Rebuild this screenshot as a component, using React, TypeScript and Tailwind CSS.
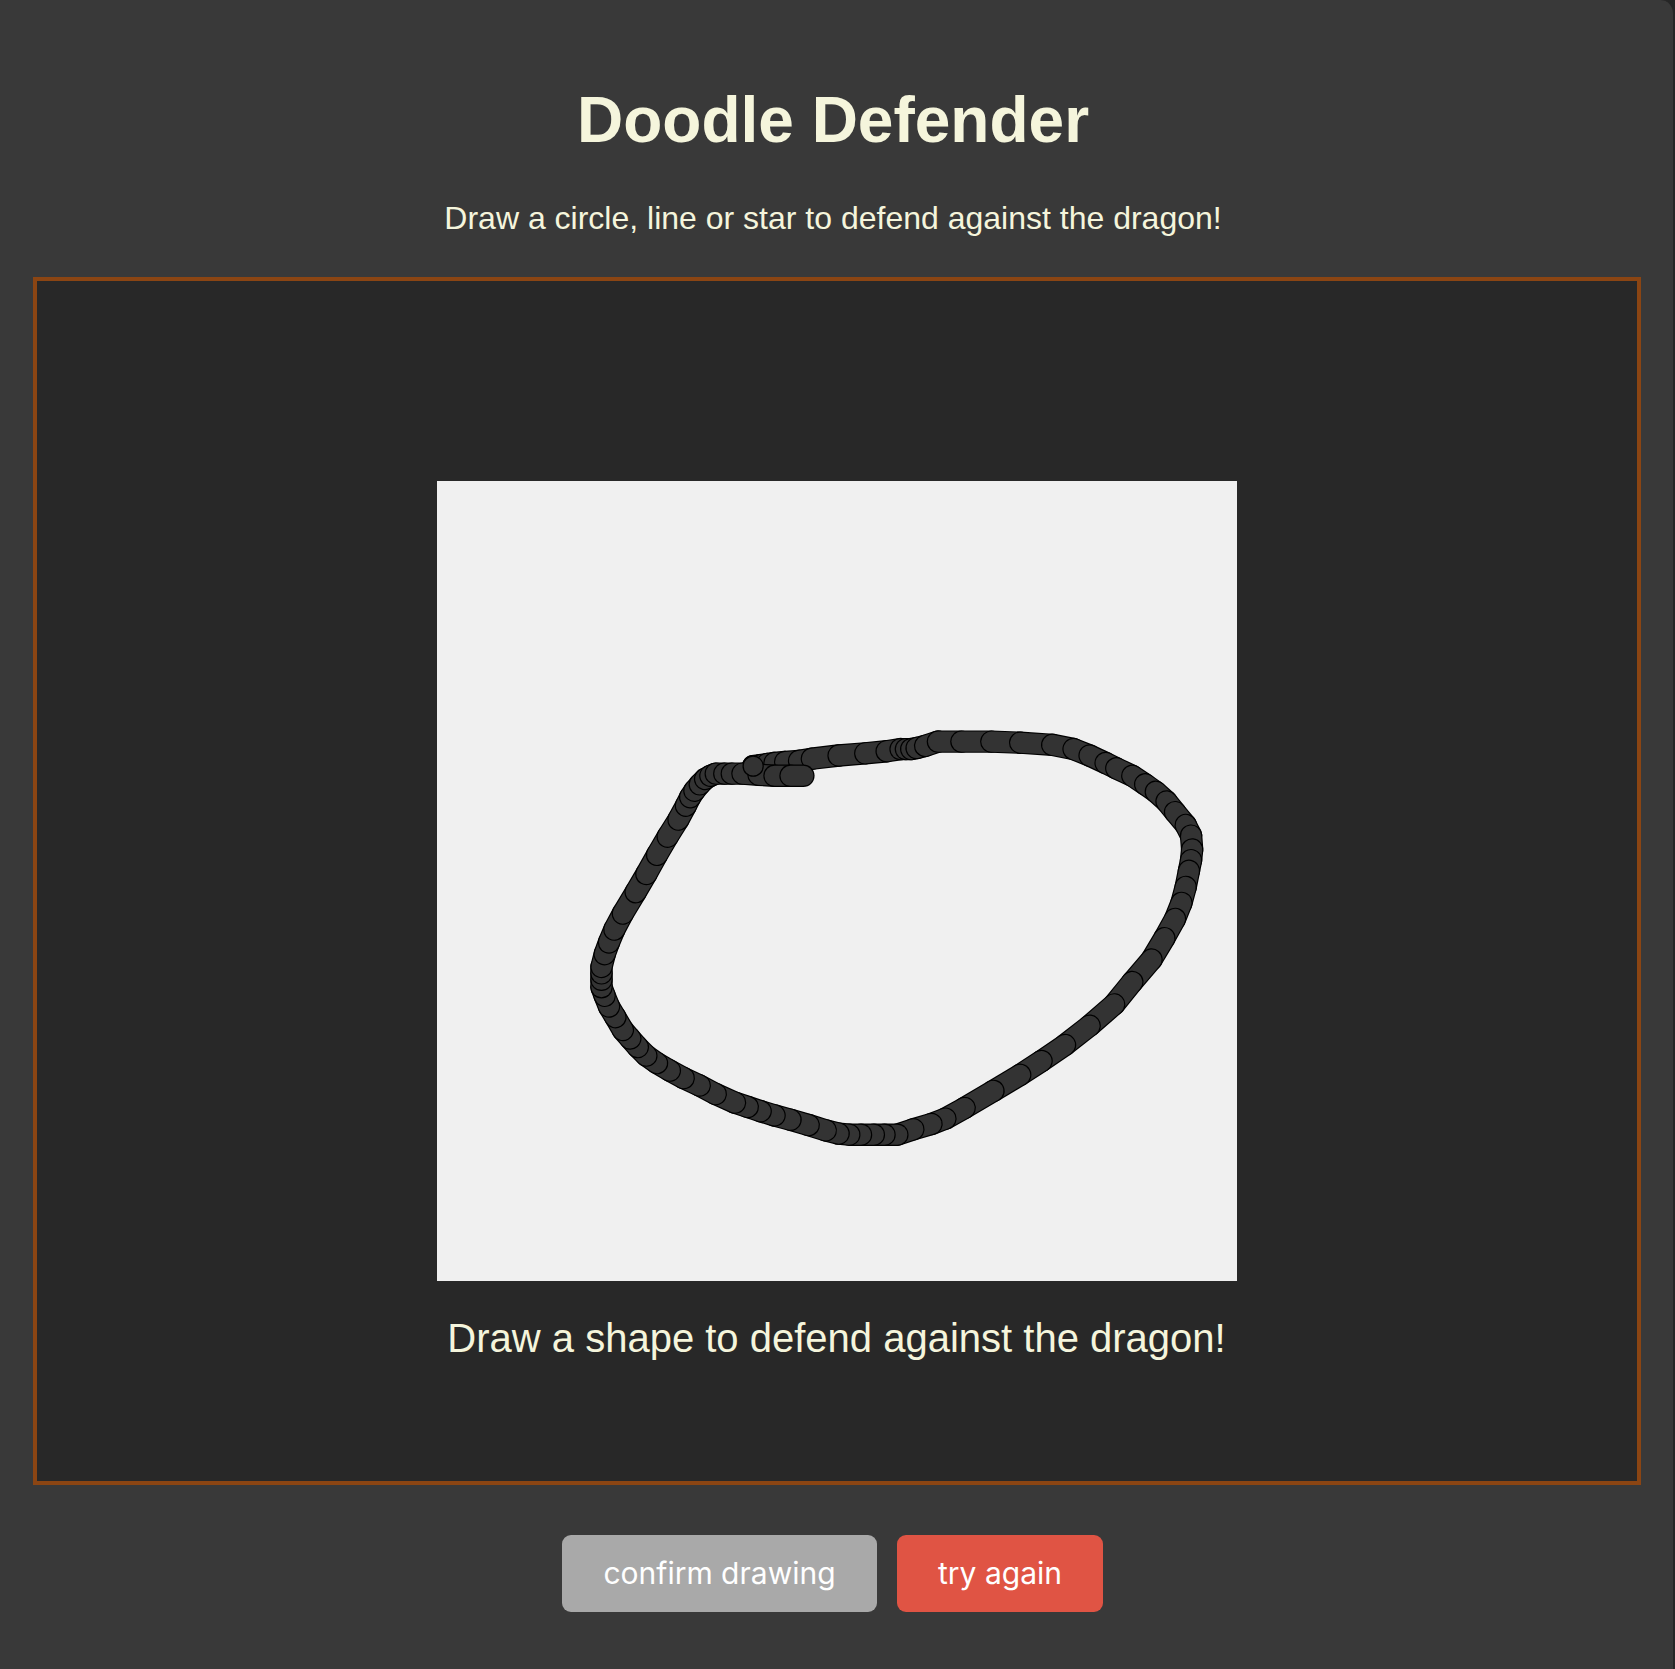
import React from 'react';

// points of the doodle, in the same units as the svg viewBox below
const doodle: [number, number][] = [
  [705, 717], [712, 716], [718, 715], [725, 714], [735, 713], [748, 712], [760, 710], [785, 707],
  [810, 705], [830, 703], [843, 701], [848, 701], [853, 701], [858, 700], [866, 698], [878, 694],
  [900, 694], [928, 694], [955, 695], [985, 697], [1005, 701], [1020, 707], [1035, 714], [1045, 719],
  [1060, 726], [1072, 734], [1082, 741], [1092, 750], [1100, 760], [1110, 772], [1115, 782], [1116, 795],
  [1115, 805], [1113, 815], [1110, 830], [1106, 845], [1100, 860], [1090, 878], [1078, 898], [1060, 919],
  [1043, 940], [1020, 960], [997, 978], [975, 993], [955, 1006], [930, 1021], [903, 1037], [885, 1047],
  [872, 1052], [855, 1057], [840, 1062], [828, 1062], [818, 1062], [806, 1062], [795, 1062], [785, 1061],
  [773, 1058], [757, 1053], [740, 1048], [725, 1044], [712, 1040], [700, 1036], [688, 1032], [670, 1024],
  [655, 1016], [640, 1009], [627, 1002], [615, 995], [605, 988], [597, 980], [590, 972], [583, 964],
  [576, 952], [570, 942], [566, 932], [563, 924], [563, 917], [563, 911], [563, 905], [566, 893],
  [570, 882], [575, 870], [583, 855], [595, 835], [605, 818], [615, 800], [625, 783], [635, 767],
  [642, 754], [646, 746], [650, 740], [655, 734], [660, 729], [665, 726], [670, 724], [678, 724],
  [685, 724], [695, 724], [710, 725], [725, 726], [740, 726], [752, 726],
];

const R = 9.4;

const Doodle = () => (
  <svg width={800} height={800} viewBox="409 450 749 749" className="block bg-[#f0f0f0]">
    {doodle.map((p, i) => {
      const prev = i === 0 ? p : doodle[i - 1];
      return (
        <g key={i}>
          <line x1={prev[0]} y1={prev[1]} x2={p[0]} y2={p[1]} stroke="#000" strokeWidth={R * 2 + 2.2} strokeLinecap="round" />
          <line x1={prev[0]} y1={prev[1]} x2={p[0]} y2={p[1]} stroke="#333" strokeWidth={R * 2} strokeLinecap="round" />
        </g>
      );
    })}
    {/* the pen-down blob where the stroke starts */}
    <circle cx={705} cy={717} r={R} fill="#333" stroke="#000" strokeWidth={1.2} />
  </svg>
);

const App = () => {
  return (
    <div className="bg-[#262626]">
      <div className="min-h-screen bg-[#393939] rounded-tr-[14px] border-r-2 border-[#262626] flex flex-col items-center pt-[83px] pb-[57px] font-['Liberation_Sans',Arial,sans-serif] text-[#f5f5dc]">
        <div className="mr-[7px] flex flex-col items-center">
          <h1 className="text-[64px] leading-[74px] font-bold">Doodle Defender</h1>
          <p className="mt-[43px] text-[32px] leading-[37px]">Draw a circle, line or star to defend against the dragon!</p>
        </div>

        <div className="mt-[40px] w-[1608px] h-[1208px] border-4 border-[#8b4513] bg-[#282828] flex flex-col items-center pt-[200px]">
          <Doodle />
          <p className="mt-[34px] text-[40px] leading-[46px]">Draw a shape to defend against the dragon!</p>
        </div>

        <div className="mt-[50px] mr-[8px] flex gap-[20px] font-['Inter',sans-serif] text-white">
          <button className="h-[77px] w-[315px] rounded-[9px] bg-[#a9a9a9] text-[30px]">confirm drawing</button>
          <button className="h-[77px] w-[206px] rounded-[9px] bg-[#e05444] text-[30px]">try again</button>
        </div>
      </div>
    </div>
  );
};

export default App;
